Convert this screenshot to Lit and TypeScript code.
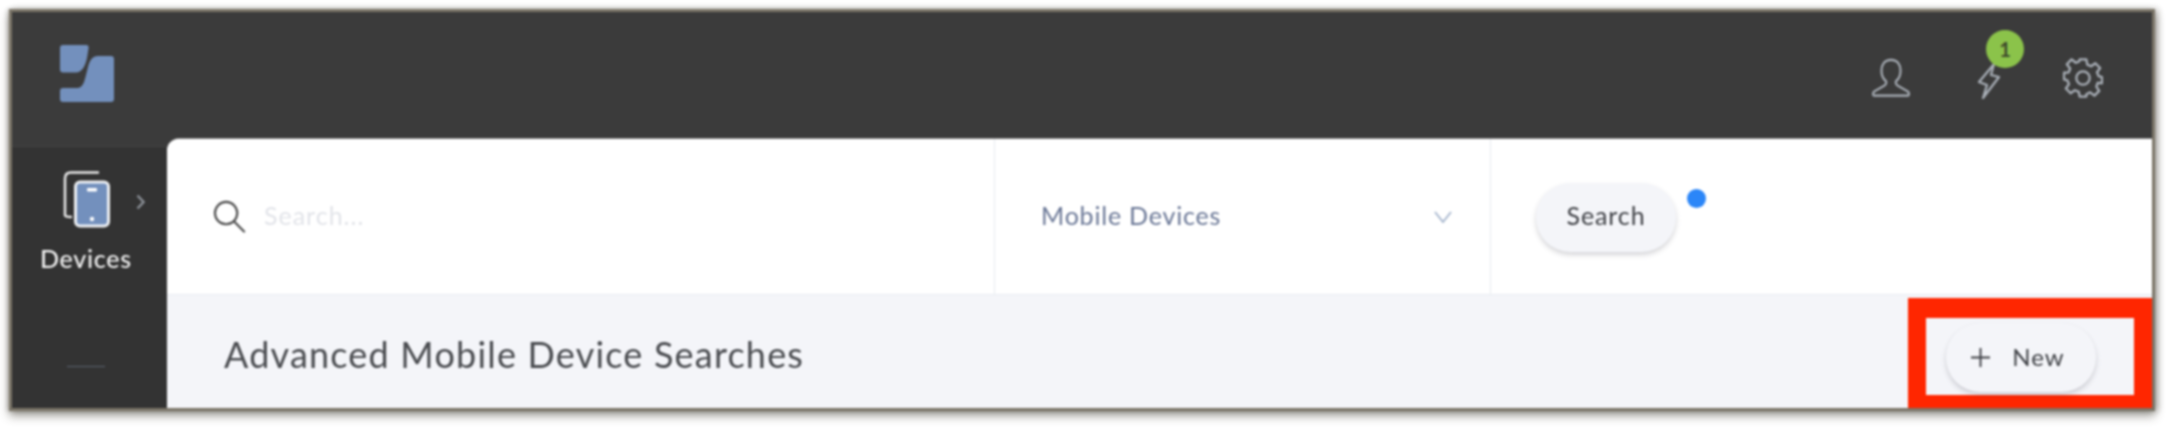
import { LitElement, html, css } from "lit";
import { customElement } from "lit/decorators.js";

@customElement("app-root")
export class AppRoot extends LitElement {
  static styles = css`
    :host { display: block; width: 2172px; height: 430px; background: #fff; overflow: hidden; font-family: Lato, "Open Sans", sans-serif; }
    .frame { box-sizing: border-box; width: 2146px; height: 402px; margin: 9px 0 0 9px; border: 3px solid #7b7568; background: #3b3b3b;
      box-shadow: 0 5px 9px rgba(60,55,45,.45), 3px 0 6px rgba(60,55,45,.3), -2px 0 4px rgba(60,55,45,.2); display: flex; flex-direction: column; filter: blur(.9px); }
    .top { height: 127px; flex: none; display: flex; align-items: flex-start; }
    .logo { width: 55px; height: 57px; margin: 33px 0 0 48px; flex: none; }
    .top-icons { margin-left: auto; display: flex; align-items: flex-start; }
    .user { width: 40px; height: 40px; margin: 46px 0 0 0; }
    .bolt-wrap { position: relative; width: 24px; height: 36px; margin: 51px 0 0 66px; }
    .bolt { width: 24px; height: 36px; display: block; }
    .badge { position: absolute; left: 9px; top: -33px; width: 38px; height: 38px; border-radius: 50%; background: #8bc34a; color: #3d4a2a; font-size: 20px; font-weight: 700; display: flex; align-items: center; justify-content: center; }
    .gear { width: 40px; height: 40px; margin: 46px 49px 0 62px; }
    .body { flex: 1; display: flex; min-height: 0; }
    .side { width: 155px; flex: none; background: #333; border-top: 7px solid #3b3b3b; box-shadow: inset 0 1px 0 #434343; display: flex; flex-direction: column; align-items: flex-start; }
    .tile { display: flex; align-items: center; margin: 23px 0 0 50px; }
    .dev { width: 50px; height: 60px; display: block; }
    .chev { width: 9px; height: 16px; margin: 6px 0 0 24px; }
    .dlabel { margin: 15px 0 0 28px; color: #f2f2f2; font-size: 25px; font-weight: 500; line-height: 28px; letter-spacing: .75px; }
    .rule { width: 38px; height: 1px; background: #5b6270; margin: 94px 0 0 55px; }
    .panel { flex: 1; min-width: 0; background: #f4f5f9; border-top-left-radius: 12px; overflow: hidden; display: flex; flex-direction: column; margin-top: 0; box-shadow: 0 -1px 0 #8a8a8a; }
    .search-row { height: 156px; flex: none; background: #fff; border-bottom: 1px solid #e8ecf2; box-sizing: border-box; display: flex; align-items: stretch; }
    .cell { display: flex; align-items: center; box-sizing: border-box; }
    .c1 { width: 828px; padding-left: 46px; border-right: 1px solid #e6eaf1; }
    .mag { width: 33px; height: 33px; flex: none; }
    .ph { margin: -3px 0 0 18px; color: #e2e4e9; font-size: 25px; letter-spacing: 1px; }
    .c2 { width: 496px; padding: 0 38px 0 46px; border-right: 1px solid #e6eaf1; justify-content: space-between; }
    .sel { color: #6a7796; font-size: 25px; letter-spacing: .8px; margin-top: -3px; }
    .vee { width: 18px; height: 12px; }
    .c3 { flex: 1; padding-left: 45px; align-items: flex-start; }
    .btn { border: 0; border-radius: 35px; background: #f4f5f9; color: #3e4045; font: inherit; font-size: 25px; box-shadow: 0 3px 5px rgba(70,70,80,.22); display: flex; align-items: center; justify-content: center; padding: 0 0 3px; box-sizing: border-box; }
    .b-search { width: 140px; height: 69px; margin-top: 44px; padding-bottom: 5px; letter-spacing: .9px; }
    .dot { width: 19px; height: 19px; border-radius: 50%; background: #2b86f8; margin: 50px 0 0 11px; }
    .head { flex: 1; display: flex; align-items: flex-start; justify-content: space-between; }
    .title { margin: 38px 0 0 57px; color: #4a4c50; font-size: 36px; line-height: 42px; font-weight: 400; letter-spacing: 1.2px; }
    .mark { box-sizing: border-box; width: 244px; height: 110px; margin-top: 3px; border: solid #ff2600; border-width: 20px 18px 13px 18px; padding: 5px 0 0 20px; }
    .b-new { width: 150px; height: 69px; font-size: 24px; letter-spacing: 1px; gap: 22px; padding-right: 6px; }
    .plus { width: 19px; height: 19px; margin-top: 3px; }
  `;

  render() {
    return html`
      <div class="frame">
        <div class="top">
          <svg class="logo" viewBox="0 0 55 57">
            <path fill="#7390bd" d="M3 0H26Q29 0 28.600 3L27 13Q24 27 16 27.500H3Q0 27.500 0 24.500V3Q0 0 3 0Z"/>
            <path fill="#7390bd" d="M3 43H18Q23 43 25.500 32L28.500 20Q31 11 38 11H51Q54 11 54 14V54Q54 57 51 57H3Q0 57 0 54V46Q0 43 3 43Z"/>
          </svg>
          <div class="top-icons">
            <svg class="user" viewBox="0 0 42 42" fill="none" stroke="#aab0b8" stroke-width="2.200" stroke-linejoin="round">
              <path d="M21 2C14 2 11 7.500 11 13C11 18 13 22 15.500 24C16.500 25 16 28 14 29L3.500 35C2 36 1.500 39.500 3.500 39.500H38.500C40.500 39.500 40 36 38.500 35L28 29C26 28 25.500 25 26.500 24C29 22 31 18 31 13C31 7.500 28 2 21 2Z"/>
            </svg>
            <div class="bolt-wrap">
              <svg class="bolt" viewBox="0 0 24 36" fill="none" stroke="#aab0b8" stroke-width="2.200" stroke-linejoin="round">
                <path d="M17 1L2 19L10 22L6 35L22 14L14 12Z"/>
              </svg>
              <div class="badge">1</div>
            </div>
            <svg class="gear" viewBox="0 0 42 42" fill="none" stroke="#aab0b8" stroke-width="2.400" stroke-linejoin="round">
              <path d="M17.500 2H24.500L25.500 7.500L29.500 9.200L34 6L39 11L35.700 15.500L37.400 19.500L41 20.500V27L36.500 26.500L35 30.500L38 35L33 40L28.500 36.500L24.500 38.500V41H17.500L16.500 36L12.500 34.300L8 37.500L3 32.500L6.300 28L4.600 24L1 23V16L6 15.500L7.500 11.500L4 7L9 2L13.500 5.500L17 4Z" transform="translate(0 -.5)"/>
              <circle cx="21" cy="21" r="7"/>
            </svg>
          </div>
        </div>
        <div class="body">
          <div class="side">
            <div class="tile">
              <svg class="dev" viewBox="0 0 50 60">
                <path d="M36 3.500H9Q3 3.500 3 9.500V46" fill="none" stroke="#e8e8e8" stroke-width="2.500" stroke-linecap="round"/>
                <path d="M3 46Q3 48 10 48" fill="none" stroke="#e8e8e8" stroke-width="2.500"/>
                <rect x="13.500" y="13" width="33" height="44" rx="4.500" fill="#7390bd" stroke="#eef0f3" stroke-width="3"/>
                <rect x="25" y="19" width="10" height="3.500" rx="1" fill="#fff"/>
                <circle cx="30" cy="50" r="2.200" fill="#fff"/>
              </svg>
              <svg class="chev" viewBox="0 0 9 16" fill="none" stroke="#8a8f96" stroke-width="2.400"><path d="M1.500 1.500L7.500 8L1.500 14.500"/></svg>
            </div>
            <div class="dlabel">Devices</div>
            <div class="rule"></div>
          </div>
          <div class="panel">
            <div class="search-row">
              <div class="cell c1">
                <svg class="mag" viewBox="0 0 34 34" fill="none" stroke="#4a4a4a" stroke-width="2.200" stroke-linecap="round"><circle cx="13.500" cy="13.500" r="11.500"/><path d="M21.500 22L32 32.500"/></svg>
                <span class="ph">Search...</span>
              </div>
              <div class="cell c2">
                <span class="sel">Mobile Devices</span>
                <svg class="vee" viewBox="0 0 18 12" fill="none" stroke="#a4b4cc" stroke-width="1.800"><path d="M1 1L9 11L17 1"/></svg>
              </div>
              <div class="cell c3">
                <button class="btn b-search">Search</button>
                <div class="dot"></div>
              </div>
            </div>
            <div class="head">
              <div class="title">Advanced Mobile Device Searches</div>
              <div class="mark">
                <button class="btn b-new">
                  <svg class="plus" viewBox="0 0 20 20" fill="none" stroke="#3e4045" stroke-width="2"><path d="M10 0V20M0 10H20"/></svg>
                  <span>New</span>
                </button>
              </div>
            </div>
          </div>
        </div>
      </div>
    `;
  }
}
